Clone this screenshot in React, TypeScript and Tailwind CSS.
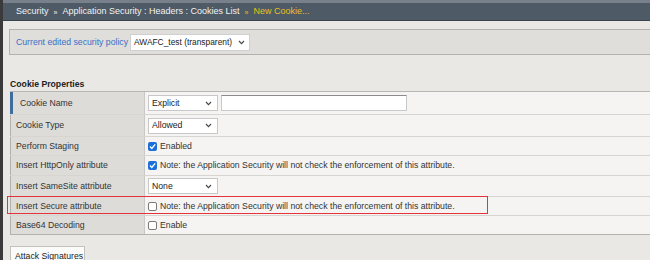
import React from "react";

const Chevron = () => (
  <svg width="7" height="5" viewBox="0 0 7 5" className="shrink-0">
    <path d="M1 1 L3.5 3.6 L6 1" fill="none" stroke="#444" strokeWidth="1.1" />
  </svg>
);

const Select = ({ value, w }: { value: string; w: string }) => (
  <div className={`${w} h-[16px] bg-white border border-[#c8c8c8] flex items-center justify-between pl-[3px] pr-[5px] text-[#222]`}>
    <span>{value}</span>
    <Chevron />
  </div>
);

const Check = ({ checked }: { checked: boolean }) =>
  checked ? (
    <div className="w-[9px] h-[9px] rounded-[2px] bg-[#1a6fd8] flex items-center justify-center shrink-0">
      <svg width="9" height="9" viewBox="0 0 9 9">
        <path d="M2 4.6 L3.8 6.4 L7.2 2.4" fill="none" stroke="#fff" strokeWidth="1.4" />
      </svg>
    </div>
  ) : (
    <div className="w-[9px] h-[9px] rounded-[2px] bg-white border border-[#7a7a7a] shrink-0" />
  );

const Row = ({
  label,
  h,
  children,
  first,
  last,
}: {
  label: string;
  h: string;
  children: React.ReactNode;
  first?: boolean;
  last?: boolean;
}) => (
  <div className={`flex ${h} border-b ${last ? "border-[#b3b2ae]" : "border-[#d6d5d1]"}`}>
    <div
      className={`w-[135px] shrink-0 bg-[#dddcd8] flex items-center text-[#333] border-r border-[#c9c8c4] ${
        first ? "border-l-[3px] border-l-[#3f6e9c] pl-[7px]" : "border-l border-l-[#b2b1ad] pl-[5px]"
      }`}
    >
      {label}
    </div>
    <div className="flex-1 bg-[#f5f4f2] flex items-center pl-[3px] gap-[3px] text-[#333]">{children}</div>
  </div>
);

export default function App() {
  const note = "Note: the Application Security will not check the enforcement of this attribute.";
  return (
    <div
      className="w-[650px] h-[260px] overflow-hidden flex bg-[#e9e8e4] text-[8.7px] leading-none"
      style={{ fontFamily: '"Liberation Sans", Arial, sans-serif' }}
    >
      <div className="w-[3px] shrink-0 bg-[#3a3a3a]" />
      <div className="flex-1">
        <div className="h-[3px] bg-[#78818b]" />
        <div className="h-[18px] bg-[#4e5a66] border-b border-[#3b444d] flex items-center pl-[13px] text-[9px] text-[#f2f2f2]">
          <span>Security</span>
          <span className="mx-[5px] text-[7px] mt-[2px]">»</span>
          <span>Application Security : Headers : Cookies List</span>
          <span className="mx-[5px] text-[7px] mt-[2px] text-[#e6c21c]">»</span>
          <span className="text-[#e6c21c]">New Cookie...</span>
        </div>
        <div className="mt-[8px] ml-[6px] h-[26px] bg-[#dfdedb] border-y border-l border-[#b3b2ae] flex items-center pl-[6px]">
          <span className="text-[#3b6fc6]">Current edited security policy</span>
          <div className="ml-[2px] w-[120px] h-[17px] bg-white border border-[#d0d0d0] flex items-center justify-between pl-[3px] pr-[4px] text-[#222]">
            <span className="whitespace-nowrap text-[8.4px]">AWAFC_test (transparent)</span>
            <Chevron />
          </div>
        </div>
        <div className="ml-[7px] mt-[25px] h-[9px] font-bold text-[#222]">Cookie Properties</div>
        <div className="relative ml-[7px] mt-[2px] border-t border-[#b7b6b2]">
          <Row label="Cookie Name" h="h-[23px]" first>
            <Select value="Explicit" w="w-[70px]" />
            <div className="w-[186px] h-[16px] bg-white border border-[#c8c8c8] border-t-[#8c8c8c]" />
          </Row>
          <Row label="Cookie Type" h="h-[22px]">
            <Select value="Allowed" w="w-[70px]" />
          </Row>
          <Row label="Perform Staging" h="h-[19px]">
            <Check checked />
            <span>Enabled</span>
          </Row>
          <Row label="Insert HttpOnly attribute" h="h-[20px]">
            <Check checked />
            <span>{note}</span>
          </Row>
          <Row label="Insert SameSite attribute" h="h-[21px]">
            <Select value="None" w="w-[70px]" />
          </Row>
          <Row label="Insert Secure attribute" h="h-[19px]">
            <Check checked={false} />
            <span>{note}</span>
          </Row>
          <Row label="Base64 Decoding" h="h-[19px]" last>
            <Check checked={false} />
            <span>Enable</span>
          </Row>
          <div className="absolute left-[-3px] top-[104px] w-[481px] h-[18px] border border-[#e3343c] pointer-events-none" />
        </div>
        <div className="ml-[7px] mt-[11px] w-[75px] h-[20px] bg-[#fbfbfa] border-t border-x border-[#c3c2be] pl-[4px] pt-[5px] text-[#222]">
          Attack Signatures
        </div>
      </div>
    </div>
  );
}
